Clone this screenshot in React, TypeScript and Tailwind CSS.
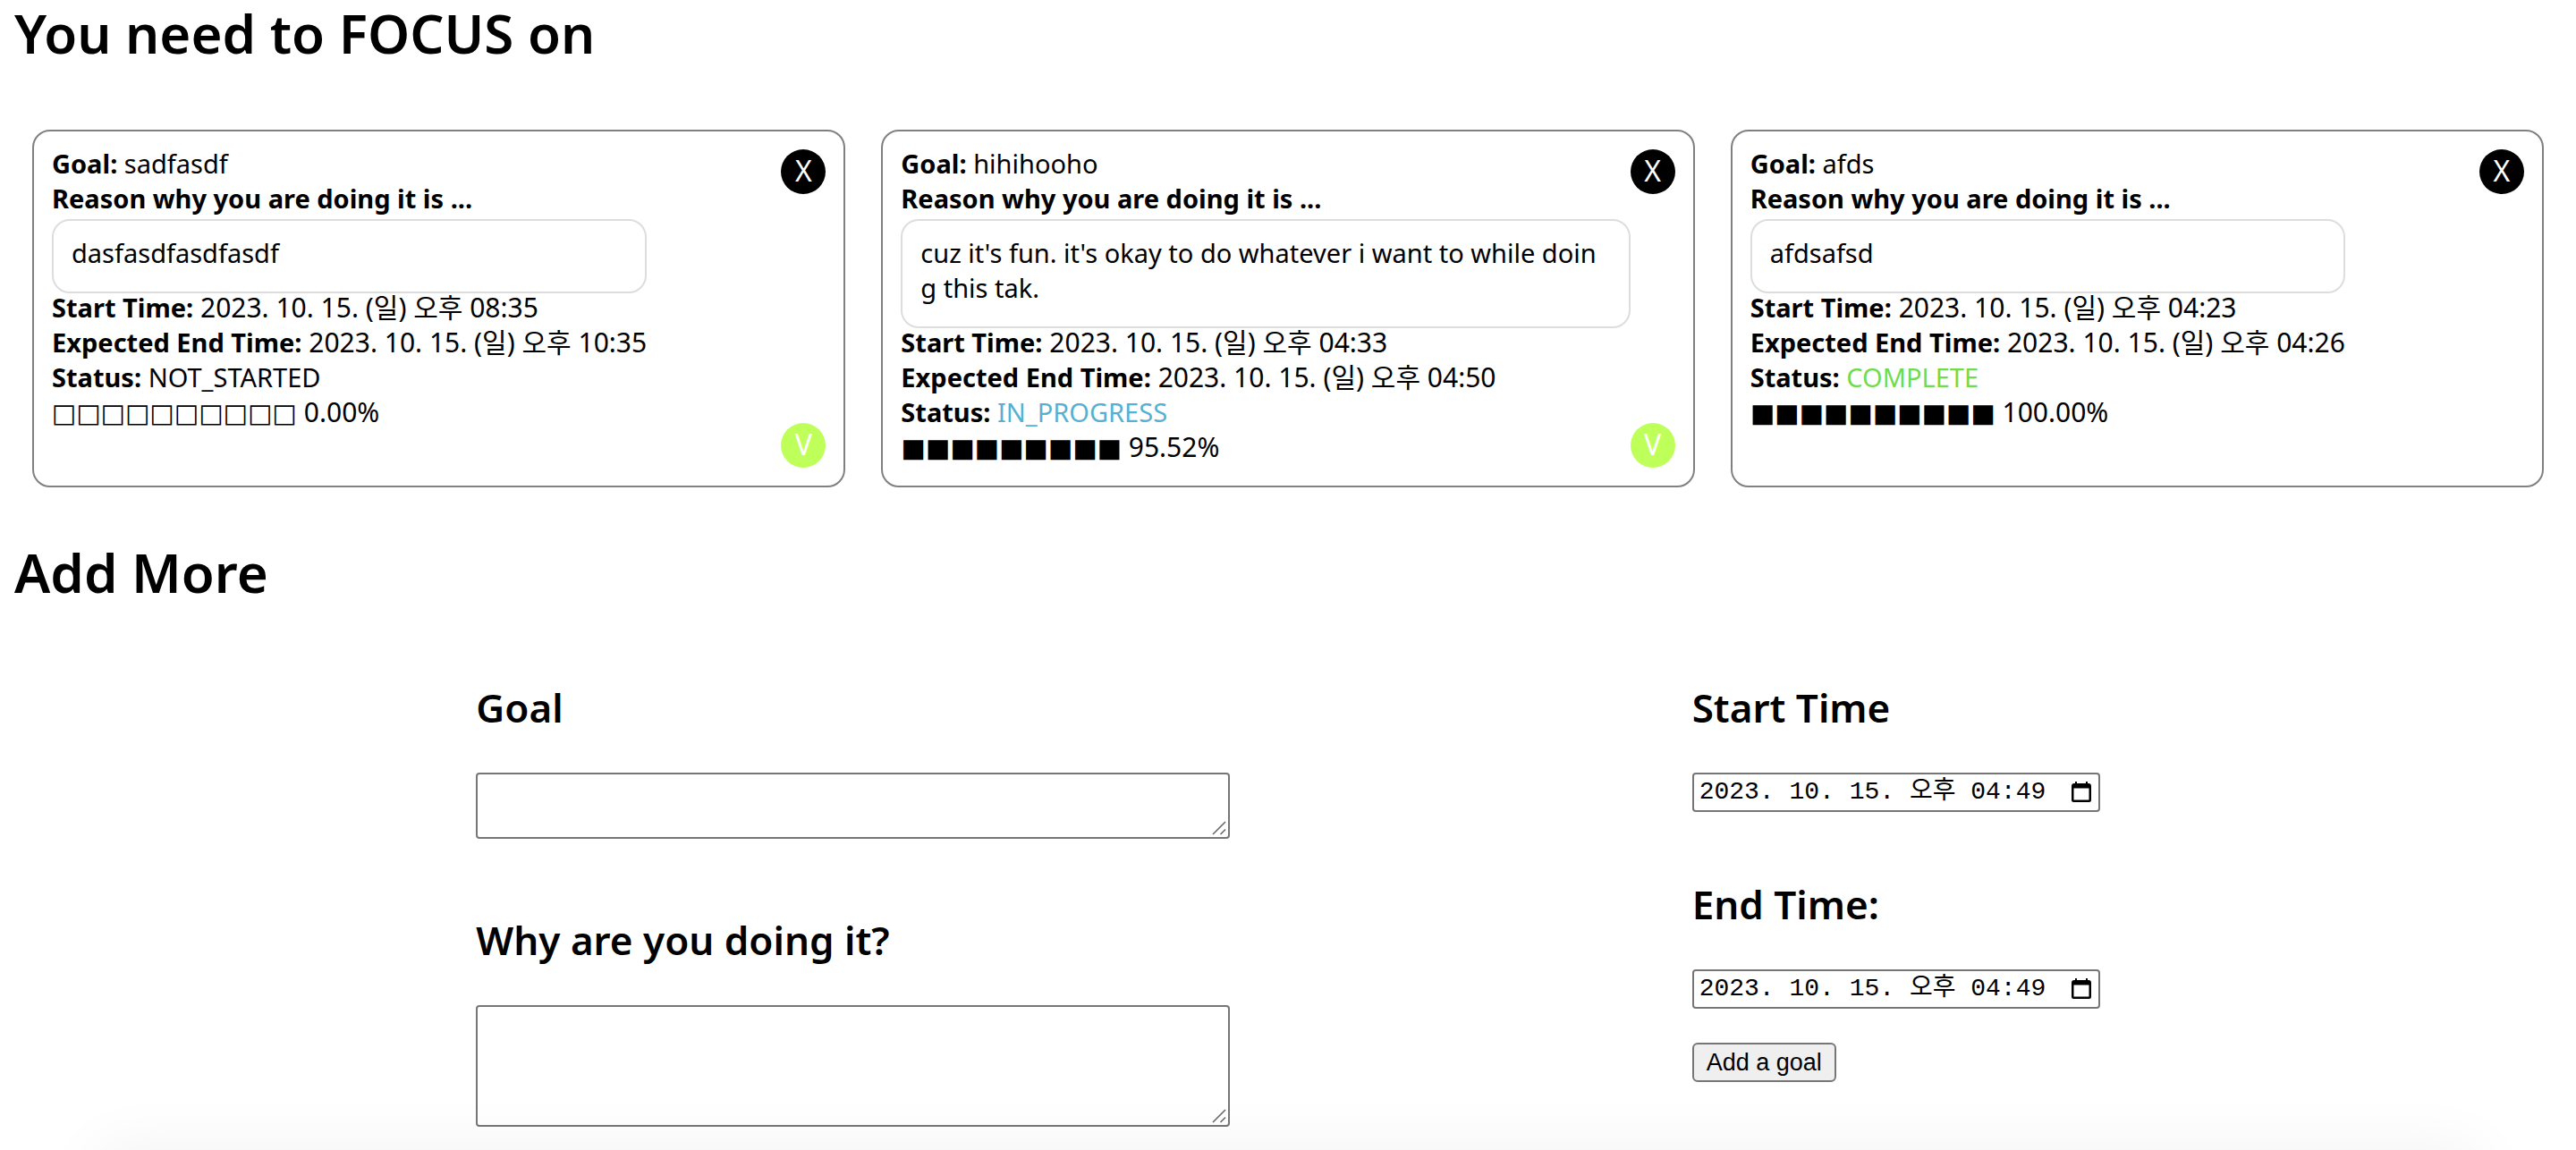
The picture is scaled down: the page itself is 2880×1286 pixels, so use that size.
import { useState } from "react";

type Status = "NOT_STARTED" | "IN_PROGRESS" | "COMPLETE";

type Goal = {
  goal: string;
  reason: string;
  start: string;
  end: string;
  status: Status;
  percent: number;
};

const goals: Goal[] = [
  {
    goal: "sadfasdf",
    reason: "dasfasdfasdfasdf",
    start: "2023. 10. 15. (일) 오후 08:35",
    end: "2023. 10. 15. (일) 오후 10:35",
    status: "NOT_STARTED",
    percent: 0,
  },
  {
    goal: "hihihooho",
    reason: "cuz it's fun. it's okay to do whatever i want to while doing this tak.",
    start: "2023. 10. 15. (일) 오후 04:33",
    end: "2023. 10. 15. (일) 오후 04:50",
    status: "IN_PROGRESS",
    percent: 95.52,
  },
  {
    goal: "afds",
    reason: "afdsafsd",
    start: "2023. 10. 15. (일) 오후 04:23",
    end: "2023. 10. 15. (일) 오후 04:26",
    status: "COMPLETE",
    percent: 100,
  },
];

const statusColor: Record<Status, string> = {
  NOT_STARTED: "text-black",
  IN_PROGRESS: "text-[#55b1d3]",
  COMPLETE: "text-[#6fdc4b]",
};

// One square per full ten percent; an untouched goal shows ten empty ones.
function squares(percent: number) {
  return percent === 0 ? "□".repeat(10) : "■".repeat(Math.floor(percent / 10));
}

function Label({ children }: { children: string }) {
  return <strong className="text-[29px] font-bold">{children}</strong>;
}

function GoalCard({ item }: { item: Goal }) {
  return (
    <li className="flex min-h-[400px] rounded-[20px] border-2 border-[#808080] px-5 pb-5">
      <div className="min-w-0 flex-1 pt-4">
        <div className="w-fit">
          <p>
            <Label>Goal:</Label> {item.goal}
          </p>
          <p>
            <Label>Reason why you are doing it is ...</Label>
          </p>
          <p className="mt-1 rounded-[20px] border-2 border-[#dddddd] px-5 pt-4 pb-6 break-all">
            {item.reason}
          </p>
          <div className="-mt-1 grid auto-rows-[39px] text-[30px]">
            <p>
              <Label>Start Time:</Label> {item.start}
            </p>
            <p>
              <Label>Expected End Time:</Label> {item.end}
            </p>
            <p className="text-[29px]">
              <Label>Status:</Label>{" "}
              <span className={statusColor[item.status]}>{item.status}</span>
            </p>
            <p>
              <span className="font-['DejaVu_Sans',sans-serif] text-[29px]">
                {squares(item.percent)}
              </span>{" "}
              {item.percent.toFixed(2)}%
            </p>
          </div>
        </div>
      </div>
      <div className="flex shrink-0 flex-col justify-between pt-5 text-[32px] text-white">
        <button
          type="button"
          aria-label="Delete goal"
          className="flex size-[50px] items-center justify-center rounded-full bg-black pb-1"
        >
          X
        </button>
        {item.status !== "COMPLETE" && (
          <button
            type="button"
            aria-label="Complete goal"
            className="flex size-[50px] items-center justify-center rounded-full bg-[#bfff5a] pb-1"
          >
            V
          </button>
        )}
      </div>
    </li>
  );
}

function TextField({ id, label, size }: { id: string; label: string; size: string }) {
  return (
    <div>
      <label htmlFor={id} className="block text-[44px] leading-[58px] font-semibold">
        {label}
      </label>
      <div className="relative mt-11">
        <textarea
          id={id}
          className={`block w-full resize-none rounded-[4px] border-2 border-[#767676] bg-white p-1 ${size}`}
        />
        <svg
          className="pointer-events-none absolute right-1 bottom-1 size-4"
          viewBox="0 0 16 16"
          stroke="#6b6b6b"
          strokeWidth="1.6"
        >
          <path d="M1 15 15 1M9.500 15 15 9.500" />
        </svg>
      </div>
    </div>
  );
}

function TimeField({ id, label }: { id: string; label: string }) {
  const [value, setValue] = useState("2023. 10. 15. 오후 04:49");
  return (
    <div>
      <label htmlFor={id} className="block text-[44px] leading-[58px] font-semibold">
        {label}
      </label>
      <div className="mt-11 flex h-11 items-center rounded-[4px] border-2 border-[#767676] pr-2 pl-1.5">
        <input
          id={id}
          type="text"
          value={value}
          onChange={(e) => setValue(e.target.value)}
          className="w-full min-w-0 bg-transparent font-['Liberation_Mono','Noto_Sans_CJK_KR',monospace] text-[28px] leading-9 outline-none"
        />
        <button type="button" aria-label="Open calendar" className="shrink-0">
          <svg className="h-6 w-[22px]" viewBox="0 0 22 24">
            <path d="M4 0h2v2h10V0h2v2h1a3 3 0 0 1 3 3v15.500a2.500 2.500 0 0 1-2.500 2.500h-17A2.500 2.500 0 0 1 0 20.500V5a3 3 0 0 1 3-3h1zM2.500 7.500v13h17v-13z" />
          </svg>
        </button>
      </div>
    </div>
  );
}

export default function App() {
  return (
    <main className="relative min-h-screen overflow-hidden bg-white px-4 pb-[26px] font-['Noto_Sans','Noto_Sans_CJK_KR',sans-serif] text-[29px] leading-[39px] text-black">
      <h1 className="text-[60px] leading-[74px] font-semibold">You need to FOCUS on</h1>
      <ul className="mx-5 mt-[71px] grid grid-cols-3 gap-10">
        {goals.map((item) => (
          <GoalCard key={item.goal} item={item} />
        ))}
      </ul>
      <h1 className="mt-[58px] text-[60px] leading-[74px] font-semibold">Add More</h1>
      <form className="mt-[85px] flex justify-evenly">
        <div className="flex w-[843px] flex-col gap-[84px]">
          <TextField id="goal" label="Goal" size="h-[74px]" />
          <TextField id="reason" label="Why are you doing it?" size="h-[136px]" />
        </div>
        <div className="flex w-[456px] flex-col">
          <TimeField id="start" label="Start Time" />
          <div className="mt-[74px]">
            <TimeField id="end" label="End Time:" />
          </div>
          <button
            type="button"
            className="mt-[38px] h-11 self-start rounded-[6px] border-2 border-[#767676] bg-[#efefef] px-3.5 font-['Liberation_Sans',sans-serif] text-[27px] leading-9"
          >
            Add a goal
          </button>
        </div>
      </form>
      <div className="pointer-events-none absolute inset-x-[110px] -bottom-20 h-20 shadow-[0_0_70px_rgba(0,0,0,0.06)]" />
    </main>
  );
}
